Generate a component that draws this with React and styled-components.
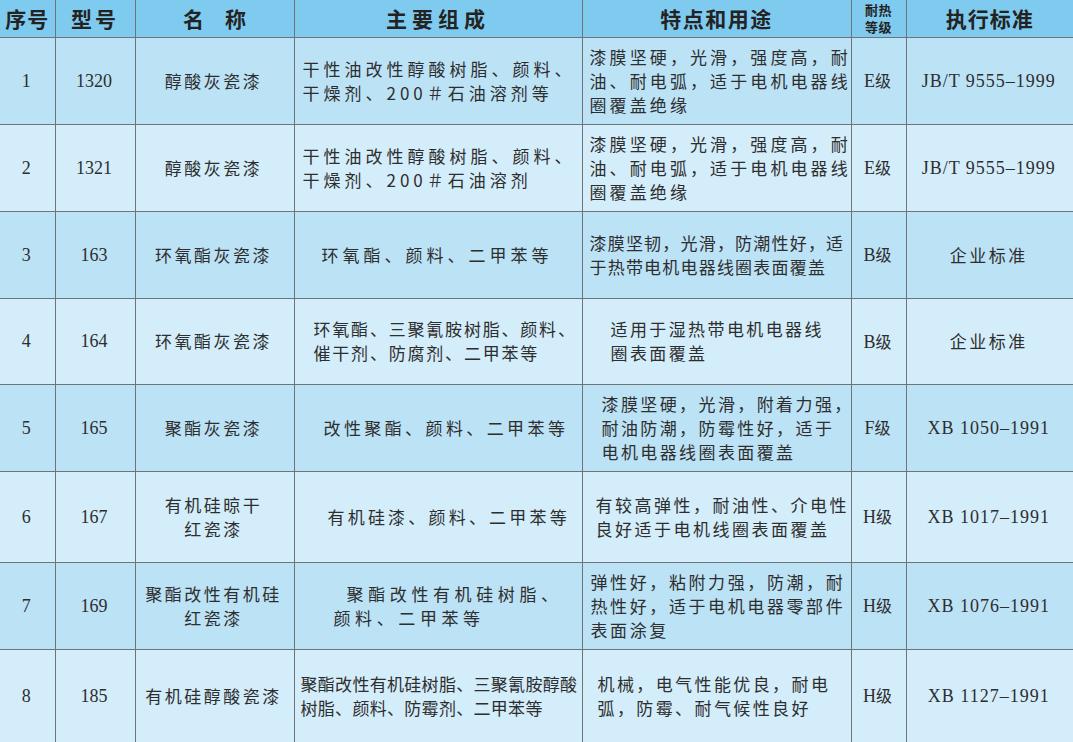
import React from 'react'
import styled, { createGlobalStyle } from 'styled-components'

const GlobalStyle = createGlobalStyle`
  html, body {
    margin: 0;
    padding: 0;
    background: #d4edfa;
  }
  body {
    font-family: "Noto Sans CJK SC", "Noto Sans", sans-serif;
    color: #2e2e2e;
  }
`

const colors = {
  head: '#7fcaef',
  dark: '#bce2f6',
  light: '#d4edfa',
  line: '#6f7478',
  text: '#2e2e2e'
}

const Table = styled.table`
  width: 1073px;
  table-layout: fixed;
  border-collapse: collapse;
  border-spacing: 0;
`

const HeadRow = styled.tr`
  height: 37px;
  background: ${colors.head};
`

const HeadCell = styled.th`
  padding: 0;
  font-family: "Noto Sans CJK SC", sans-serif;
  font-weight: 700;
  font-size: 21px;
  line-height: 30px;
  letter-spacing: ${props => props.$spacing || 0}px;
  color: #232323;
  text-align: center;
  vertical-align: middle;
  white-space: nowrap;
  border-right: 1px solid ${colors.line};
  border-bottom: 1px solid ${colors.line};
  &:last-child {
    border-right: none;
  }
`

const SmallHead = styled.span`
  display: block;
  font-size: 13px;
  line-height: 17px;
  letter-spacing: 0.5px;
`

const Row = styled.tr`
  height: ${props => props.$height}px;
  background: ${props => (props.$shade ? colors.dark : colors.light)};
`

const Cell = styled.td`
  padding: 0 2px 0 ${props => props.$pad || 0}px;
  font-family: ${props =>
    props.$serif
      ? '"Liberation Serif", "Noto Sans CJK SC", serif'
      : '"Noto Sans CJK SC", sans-serif'};
  font-size: ${props => (props.$serif ? '18px' : '17px')};
  line-height: 24px;
  letter-spacing: ${props => props.$spacing || 0}px;
  color: ${colors.text};
  text-align: ${props => props.$align || 'center'};
  vertical-align: middle;
  white-space: nowrap;
  border-right: 1px solid ${colors.line};
  border-bottom: 1px solid ${colors.line};
  &:last-child {
    border-right: none;
  }
`

const Grade = styled.span`
  font-family: "Noto Sans CJK SC", sans-serif;
  font-size: 16px;
`

const widths = [55, 80, 159, 288, 269, 55, 167]

const rows = [
  {
    no: '1',
    model: '1320',
    name: ['醇酸灰瓷漆'],
    comp: ['干性油改性醇酸树脂、颜料、', '干燥剂、200＃石油溶剂等'],
    compAlign: 'left', compPad: 8, compSp: 4,
    use: ['漆膜坚硬，光滑，强度高，耐', '油、耐电弧，适于电机电器线', '圈覆盖绝缘'],
    usePad: 7, useSp: 3.1,
    grade: 'E', std: 'JB/T 9555–1999', stdSerif: true, h: 87
  },
  {
    no: '2',
    model: '1321',
    name: ['醇酸灰瓷漆'],
    comp: ['干性油改性醇酸树脂、颜料、', '干燥剂、200＃石油溶剂'],
    compAlign: 'left', compPad: 8, compSp: 4,
    use: ['漆膜坚硬，光滑，强度高，耐', '油、耐电弧，适于电机电器线', '圈覆盖绝缘'],
    usePad: 7, useSp: 3.1,
    grade: 'E', std: 'JB/T 9555–1999', stdSerif: true, h: 87
  },
  {
    no: '3',
    model: '163',
    name: ['环氧酯灰瓷漆'],
    comp: ['环氧酯、颜料、二甲苯等'],
    compAlign: 'center', compPad: 0, compSp: 4,
    use: ['漆膜坚韧，光滑，防潮性好，适', '于热带电机电器线圈表面覆盖'],
    usePad: 7, useSp: 1.2,
    grade: 'B', std: '企业标准', stdSerif: false, h: 87
  },
  {
    no: '4',
    model: '164',
    name: ['环氧酯灰瓷漆'],
    comp: ['环氧酯、三聚氰胺树脂、颜料、', '催干剂、防腐剂、二甲苯等'],
    compAlign: 'left', compPad: 19, compSp: 1.8,
    use: ['适用于湿热带电机电器线', '圈表面覆盖'],
    usePad: 28, useSp: 2.4,
    grade: 'B', std: '企业标准', stdSerif: false, h: 86
  },
  {
    no: '5',
    model: '165',
    name: ['聚酯灰瓷漆'],
    comp: ['改性聚酯、颜料、二甲苯等'],
    compAlign: 'left', compPad: 29, compSp: 3.4,
    use: ['漆膜坚硬，光滑，附着力强，', '耐油防潮，防霉性好，适于', '电机电器线圈表面覆盖'],
    usePad: 19, useSp: 2.4,
    grade: 'F', std: 'XB 1050–1991', stdSerif: true, h: 87
  },
  {
    no: '6',
    model: '167',
    name: ['有机硅晾干', '红瓷漆'],
    comp: ['有机硅漆、颜料、二甲苯等'],
    compAlign: 'left', compPad: 33, compSp: 3.2,
    use: ['有较高弹性，耐油性、介电性', '良好适于电机线圈表面覆盖'],
    usePad: 13, useSp: 2.5,
    grade: 'H', std: 'XB 1017–1991', stdSerif: true, h: 91
  },
  {
    no: '7',
    model: '169',
    name: ['聚酯改性有机硅', '红瓷漆'],
    comp: ['\u2002聚酯改性有机硅树脂、', '颜料、二甲苯等'],
    compAlign: 'left', compPad: 39, compSp: 4.6,
    use: ['弹性好，粘附力强，防潮，耐', '热性好，适于电机电器零部件', '表面涂复'],
    usePad: 8, useSp: 2.6,
    grade: 'H', std: 'XB 1076–1991', stdSerif: true, h: 87
  },
  {
    no: '8',
    model: '185',
    name: ['有机硅醇酸瓷漆'],
    comp: ['聚酯改性有机硅树脂、三聚氰胺醇酸', '树脂、颜料、防霉剂、二甲苯等'],
    compAlign: 'left', compPad: 6, compSp: 0.3,
    use: ['机械，电气性能优良，耐电', '弧，防霉、耐气候性良好'],
    usePad: 15, useSp: 2.4,
    grade: 'H', std: 'XB 1127–1991', stdSerif: true, h: 93
  }
]

const Lines = ({ lines }) =>
  lines.map((line, i) => (
    <React.Fragment key={i}>
      {i > 0 && <br />}
      {line}
    </React.Fragment>
  ))

export default function App() {
  return (
    <>
      <GlobalStyle />
      <Table>
        <colgroup>
          {widths.map((w, i) => (
            <col key={i} style={{ width: w }} />
          ))}
        </colgroup>
        <thead>
          <HeadRow>
            <HeadCell $spacing={1}>序号</HeadCell>
            <HeadCell $spacing={3}>型号</HeadCell>
            <HeadCell $spacing={0}>名　称</HeadCell>
            <HeadCell $spacing={5}>主要组成</HeadCell>
            <HeadCell $spacing={1.5}>特点和用途</HeadCell>
            <HeadCell>
              <SmallHead>耐热</SmallHead>
              <SmallHead>等级</SmallHead>
            </HeadCell>
            <HeadCell $spacing={1}>执行标准</HeadCell>
          </HeadRow>
        </thead>
        <tbody>
          {rows.map((r, i) => (
            <Row key={r.no} $shade={i % 2 === 0} $height={r.h}>
              <Cell $serif>{r.no}</Cell>
              <Cell $serif>{r.model}</Cell>
              <Cell $spacing={2.5}>
                <Lines lines={r.name} />
              </Cell>
              <Cell $align={r.compAlign} $pad={r.compPad} $spacing={r.compSp}>
                <Lines lines={r.comp} />
              </Cell>
              <Cell $align="left" $pad={r.usePad} $spacing={r.useSp}>
                <Lines lines={r.use} />
              </Cell>
              <Cell $serif>
                {r.grade}
                <Grade>级</Grade>
              </Cell>
              <Cell $serif={r.stdSerif} $spacing={r.stdSerif ? 1 : 2.5}>
                {r.std}
              </Cell>
            </Row>
          ))}
        </tbody>
      </Table>
    </>
  )
}
